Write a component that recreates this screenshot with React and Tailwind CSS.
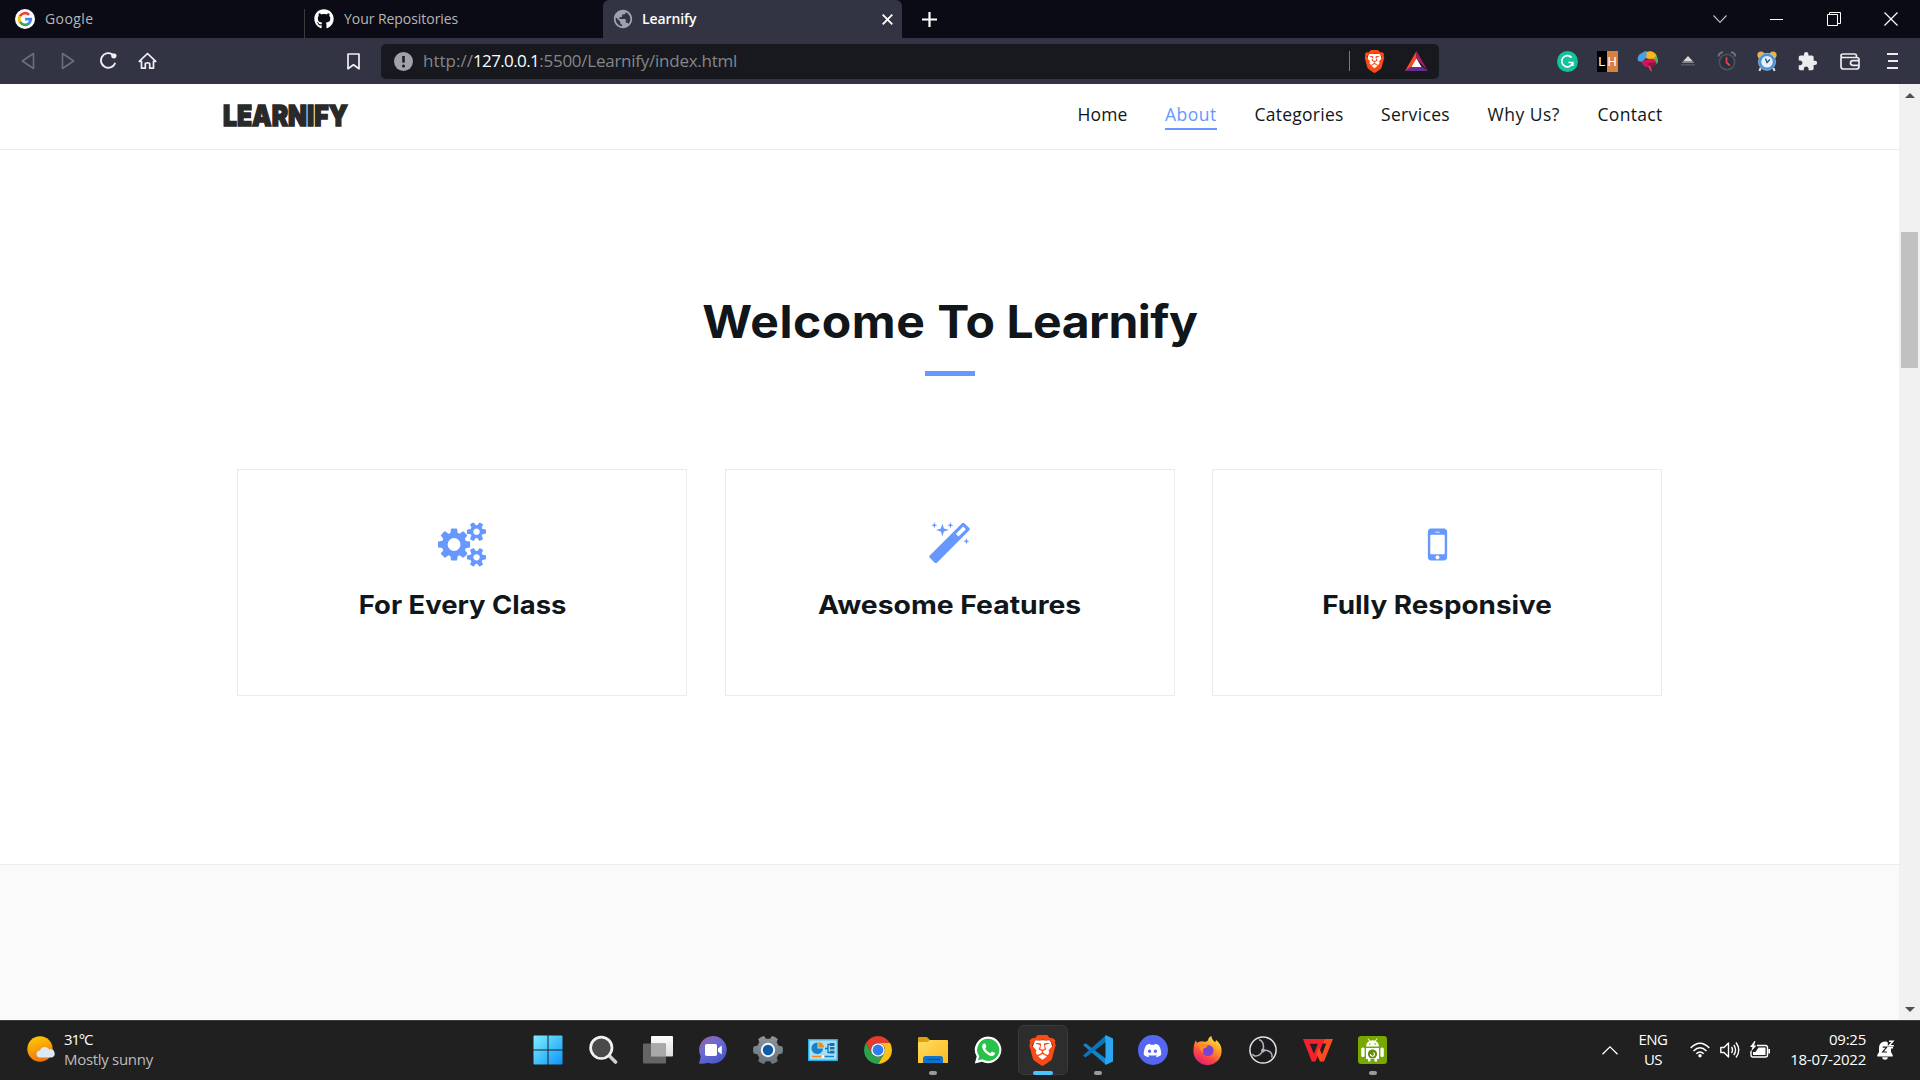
import React from "react";
import { FaGithub, FaDiscord } from "react-icons/fa";
import { SiBrave } from "react-icons/si";
import { MdExtension, MdPublic } from "react-icons/md";

/* ---------- shared drawings ---------- */

function GoogleIcon() {
  return (
    <svg className="size-5" viewBox="0 0 20 20">
      <circle cx="10" cy="10" r="10" fill="#fff" />
      <g fill="none" strokeWidth="2.7">
        <path d="M4.9 7.3A5.8 5.8 0 0 1 14.1 5.9" stroke="#ea4335" />
        <path d="M5.1 13.1A5.8 5.8 0 0 1 4.9 7.2" stroke="#fbbc05" />
        <path d="M14 14.2A5.8 5.8 0 0 1 5 12.9" stroke="#34a853" />
        <path d="M10.1 10.2H15.8A5.7 5.7 0 0 1 13.8 14.4" stroke="#4285f4" />
      </g>
    </svg>
  );
}

function BraveIcon({ className }) {
  return (
    <svg className={className} viewBox="0 0 24 24">
      <path d="M6 4H18L19.5 9L17 17L12 21L7 17L4.5 9Z" fill="#fff" />
      <SiBrave size={24} color="#fb4a14" />
    </svg>
  );
}

/* ---------- browser tab strip ---------- */

function TabStrip() {
  return (
    <div className="flex h-[38px] bg-[#0a0b14] text-sm">
      <div className="flex w-[304px] items-center pl-[15px]">
        <GoogleIcon />
        <span className="ml-2.5 tracking-[0.4px] text-[#b5b6ba]">Google</span>
      </div>
      <div className="mt-[9px] w-px bg-[#3b3b3d]" />
      <div className="flex w-[298px] items-center pl-[9px]">
        <FaGithub className="size-5 text-white" />
        <span className="ml-2.5 tracking-[-0.05px] text-[#b5b6ba]">Your Repositories</span>
      </div>
      <div className="flex w-[299px] items-center rounded-t-md bg-[#323443] pl-[9px]">
        <MdPublic className="size-[22px] text-[#9ea2ad]" />
        <span className="ml-2 font-semibold tracking-[-0.1px] text-white">Learnify</span>
        <svg className="mr-[9px] ml-auto size-[11px]" viewBox="0 0 11 11" stroke="#fff" strokeWidth="1.8">
          <path d="M.7.7L10.3 10.3M10.3.7L.7 10.3" />
        </svg>
      </div>
      <div className="flex w-[55px] items-center justify-center">
        <svg className="size-[15px]" viewBox="0 0 15 15" stroke="#fff" strokeWidth="2.2">
          <path d="M7.5 0V15M0 7.5H15" />
        </svg>
      </div>
      <div className="mr-px ml-auto flex items-center">
        <div className="flex w-[57px] justify-center">
          <svg className="h-2 w-[14px]" viewBox="0 0 14 8" fill="none" stroke="#c9cacd" strokeWidth="1.1">
            <path d="M.5.5L7 7.3L13.5.5" />
          </svg>
        </div>
        <div className="flex w-[57px] justify-center">
          <div className="h-px w-[13px] bg-white" />
        </div>
        <div className="flex w-[57px] justify-center">
          <svg className="size-[14px]" viewBox="0 0 14 14" fill="none" stroke="#fff">
            <path d="M.5 2.5H10.5V13.5H.5ZM2.5 2.5V.5H13.5V11.5H10.5" />
          </svg>
        </div>
        <div className="flex w-[57px] justify-center">
          <svg className="size-[14px]" viewBox="0 0 14 14" stroke="#fff" strokeWidth="1.2">
            <path d="M.5.5L13.5 13.5M13.5.5L.5 13.5" />
          </svg>
        </div>
      </div>
    </div>
  );
}

/* ---------- toolbar ---------- */

function Cell({ children, className = "w-10" }) {
  return <div className={"flex shrink-0 items-center justify-center " + className}>{children}</div>;
}

function BrainIcon() {
  return (
    <svg className="h-[21px] w-[22px]" viewBox="0 0 22 21">
      <path d="M1 10C0 6 2 3 5 2C7 0 10 0 11 1L10 6L8 8L5 11Z" fill="#4f9fe0" />
      <path d="M10 1C14-1 20 2 20 7L15 9L9 7Z" fill="#f7b81c" />
      <path d="M19 5C22 8 21 11 20 13L15 9Z" fill="#54b948" />
      <path d="M4 10C6 12 8 8 12 8C16 7 20 9 19 13C17 16 14 15 13 16C9 17 5 14 4 10Z" fill="#d3145a" />
      <path d="M10 12.500C13 12 16 11 19.500 12C18 16 15 16 13 16Z" fill="#8c1447" />
      <path d="M11 15L13.500 15.500L15 20.500L13.500 20Z" fill="#f2405c" />
    </svg>
  );
}

function Toolbar() {
  return (
    <div className="flex h-[46px] items-center bg-[#323443] pl-2">
      <Cell>
        <svg className="h-[18px] w-[14px]" viewBox="0 0 14 18" fill="none" stroke="#6c6e7b" strokeWidth="1.6" strokeLinejoin="round">
          <path d="M12.500 1.500V16.500L1.300 9Z" />
        </svg>
      </Cell>
      <Cell>
        <svg className="h-[18px] w-[14px]" viewBox="0 0 14 18" fill="none" stroke="#6c6e7b" strokeWidth="1.6" strokeLinejoin="round">
          <path d="M1.500 1.500V16.500L12.700 9Z" />
        </svg>
      </Cell>
      <Cell className="w-[39px]">
        <svg className="size-[18px]" viewBox="0 0 18 18" fill="none">
          <path d="M13 2.200A7.300 7.300 0 1 0 15.900 11.600" stroke="#f0f0f2" strokeWidth="1.900" strokeLinecap="round" />
          <path d="M12.200 1.500H15.500Q17.500 1.500 17.500 3.600Q17.500 6.400 15 6.400Q12.200 6.400 12.200 4Z" fill="#f0f0f2" />
        </svg>
      </Cell>
      <Cell>
        <svg className="h-[18px] w-[19px]" viewBox="0 0 19 18" fill="none" stroke="#f0f0f2" strokeWidth="1.700" strokeLinejoin="round" strokeLinecap="round">
          <path d="M1.300 9.300L9.500 1.500L17.700 9.300H15.500V16.200H11.700V11.800Q11.700 10.800 9.500 10.800Q7.300 10.800 7.300 11.800V16.200H3.500V9.300Z" />
        </svg>
      </Cell>
      <Cell className="ml-[166px] w-10">
        <svg className="h-[17px] w-[13px]" viewBox="0 0 13 17" fill="none" stroke="#f0f0f2" strokeWidth="1.700" strokeLinejoin="round">
          <path d="M1 1H12V15.800L6.500 11.800L1 15.800Z" />
        </svg>
      </Cell>
      <div className="ml-2 flex h-[35px] w-[1058px] items-center rounded-[5px] bg-[#17191f] pl-[13px] text-[17px]">
        <svg className="size-[19px]" viewBox="0 0 19 19">
          <circle cx="9.500" cy="9.500" r="9.500" fill="#9fa2aa" />
          <path d="M9.500 4V10.600" stroke="#17191f" strokeWidth="2.500" />
          <circle cx="9.500" cy="14" r="1.500" fill="#17191f" />
        </svg>
        <span className="ml-2.5 whitespace-nowrap text-[#84868a]">
          http://<span className="tracking-[-0.6px] text-white">127.0.0.1</span>
          <span className="tracking-[-0.25px]">:5500/Learnify/index.html</span>
        </span>
        <div className="ml-auto h-5 w-px bg-[#76787d]" />
        <BraveIcon className="ml-[13px] size-[23px]" />
        <svg className="mr-[11px] ml-[19px] h-5 w-[23px]" viewBox="0 0 23 20">
          <path d="M11.500 0L0 20L11.500 13Z" fill="#ff4724" />
          <path d="M11.500 0L23 20L11.500 8Z" fill="#9e1f63" />
          <path d="M0 20H23L16 15H7Z" fill="#662d91" />
          <path d="M11.500 7.500L16.500 16H6.500Z" fill="#fff" />
        </svg>
      </div>
      <Cell className="ml-[108px] w-10">
        <svg className="size-[21px]" viewBox="0 0 21 21">
          <circle cx="10.500" cy="10.500" r="10.500" fill="#15c39a" />
          <path d="M14.600 6.600A5.600 5.600 0 1 0 15.800 11.500H11.500M15.800 11.500V15" fill="none" stroke="#fff" strokeWidth="1.700" />
        </svg>
      </Cell>
      <Cell>
        <div className="flex h-[21px] w-[21px] font-['Roboto'] text-[13px] leading-[22px] text-white">
          <span className="w-1/2 bg-black text-center">L</span>
          <span className="w-1/2 bg-[#d9803f] text-center">H</span>
        </div>
      </Cell>
      <Cell className="w-[41px]">
        <BrainIcon />
      </Cell>
      <Cell className="w-[39px]">
        <svg className="h-[10px] w-[14px]" viewBox="0 0 14 10">
          <path d="M7 0L12 5.500H2Z" fill="#dcdcde" />
          <path d="M1 6.500H13" stroke="#85868c" />
          <path d="M0 8.800H14" stroke="#5f606b" strokeWidth="1.200" />
        </svg>
      </Cell>
      <Cell>
        <svg className="size-5" viewBox="0 0 20 20" fill="none">
          <circle cx="10" cy="11" r="7.700" stroke="#46525f" strokeWidth="1.700" fill="#2b2f3c" />
          <path d="M1.500 5.500Q2 1.500 6 1.200M18.500 5.500Q18 1.500 14 1.200" stroke="#68757f" strokeWidth="2" />
          <path d="M9.500 6V11.500L12.800 14.500" stroke="#e8424b" strokeWidth="1.700" />
        </svg>
      </Cell>
      <Cell>
        <svg className="h-[21px] w-5" viewBox="0 0 20 21">
          <path d="M3.500 17L2.500 20M16.500 17L17.500 20" stroke="#dfe7ef" strokeWidth="2" />
          <circle cx="4" cy="4" r="3.600" fill="#e8b448" />
          <circle cx="16" cy="4" r="3.600" fill="#e8b448" />
          <circle cx="10" cy="10.800" r="8.500" fill="#4c8fd6" stroke="#9cc3ea" strokeWidth=".8" />
          <circle cx="10" cy="10.800" r="5.800" fill="#e6f1fa" />
          <path d="M8.500 7.500L10 11.500L13 8.500" stroke="#31506e" strokeWidth="1.400" fill="none" />
        </svg>
      </Cell>
      <Cell>
        <MdExtension className="size-[21px] text-[#ececee]" />
      </Cell>
      <Cell className="w-[46px]">
        <svg className="h-[17px] w-5" viewBox="0 0 20 17" fill="none" stroke="#ececee" strokeWidth="1.700">
          <path d="M1 4.500V13.500Q1 16 3.500 16H16.500Q19 16 19 13.500V6.500Q19 4.500 16.500 4.500H3Q1 4.500 1 2.700Q1 1 3 1H14.500Q16.500 1 16.500 3V4.500M19 7.700H13Q10.500 7.700 10.500 10Q10.500 12.300 13 12.300H19" />
        </svg>
      </Cell>
      <Cell className="w-[38px]">
        <div className="flex w-[11px] flex-col gap-[5px]">
          <div className="h-0.5 bg-[#ececee]" />
          <div className="ml-px h-0.5 bg-[#ececee]" />
          <div className="h-0.5 bg-[#ececee]" />
        </div>
      </Cell>
    </div>
  );
}

/* ---------- page ---------- */

const NAV = [
  ["Home", "w-[50px] tracking-[0.15px] text-[#101619] border-transparent"],
  ["About", "w-[52px] tracking-[0.5px] text-[#6698ff] border-[#6698ff]"],
  ["Categories", "w-[89px] tracking-[0.25px] text-[#101619] border-transparent"],
  ["Services", "w-[69px] tracking-[0.34px] text-[#101619] border-transparent"],
  ["Why Us?", "w-[72.5px] tracking-[0.5px] text-[#101619] border-transparent"],
  ["Contact", "w-[65px] tracking-[0.3px] text-[#101619] border-transparent"],
];

function SiteHeader() {
  return (
    <header className="flex h-[66px] items-start justify-between border-b border-[#ebebeb] pr-[236.5px] pl-[223px]">
      <div className="mt-[17px] w-[124px] font-['Inter'] text-[29px] leading-[29px] font-black text-[#292929]">
        <span className="inline-block origin-left scale-x-[0.85] whitespace-nowrap [-webkit-text-stroke:1.5px_#292929]">LEARNIFY</span>
      </div>
      <nav className="mt-[18px] flex gap-[37.5px] text-[17.5px] leading-[25px]">
        {NAV.map(([label, cls]) => (
          <a key={label} className={"h-7 border-b-2 whitespace-nowrap " + cls}>
            {label}
          </a>
        ))}
      </nav>
    </header>
  );
}

function CogsIcon() {
  return (
    <svg className="h-[45px] w-[48.2px]" viewBox="0 0 1920 1792" fill="currentColor">
      <path d="M896 896q0-106-75-181t-181-75-181 75-75 181 75 181 181 75 181-75 75-181zM1664 1408q0-52-38-90t-90-38-90 38-38 90q0 53 37.500 90.500t90.500 37.500 90.500-37.500 37.500-90.500zM1664 384q0-52-38-90t-90-38-90 38-38 90q0 53 37.500 90.500t90.500 37.500 90.500-37.500 37.500-90.500zM1280 805v185q0 10-7 19.500t-16 10.500l-155 24q-11 35-32 76 34 48 90 115 7 11 7 20 0 12-7 19-23 30-82.500 89.500t-78.500 59.500q-11 0-21-7l-115-90q-37 19-77 31-11 108-23 155-7 24-30 24h-186q-11 0-20-7.500t-10-17.500l-23-153q-34-10-75-31l-118 89q-7 7-20 7-11 0-21-8-144-133-144-160 0-9 7-19 10-14 41-53t47-61q-23-44-35-82l-152-24q-10-1-17-9.500t-7-19.500v-185q0-10 7-19.500t16-10.500l155-24q11-35 32-76-34-48-90-115-7-11-7-20 0-12 7-20 22-30 82-89t79-59q11 0 21 7l115 90q34-18 77-32 11-108 23-154 7-24 30-24h186q11 0 20 7.500t10 17.500l23 153q34 10 75 31l118-89q8-7 20-7 11 0 21 8 144 133 144 160 0 8-7 19-12 16-42 54t-45 60q23 48 34 82l152 23q10 2 17 10.500t7 19.500zM1920 1338v140q0 16-149 31-12 27-30 52 51 113 51 138 0 4-4 7-122 71-124 71-8 0-46-47t-52-68q-20 2-30 2t-30-2q-14 21-52 68t-46 47q-2 0-124-71-4-3-4-7 0-25 51-138-18-25-30-52-149-15-149-31v-140q0-16 149-31 13-29 30-52-51-113-51-138 0-4 4-7 4-2 35-20t59-34 30-16q8 0 46 46.500t52 67.500q20-2 30-2t30 2q51-71 92-112l6-2q4 0 124 70 4 3 4 7 0 25-51 138 17 23 30 52 149 15 149 31zM1920 314v140q0 16-149 31-12 27-30 52 51 113 51 138 0 4-4 7-122 71-124 71-8 0-46-47t-52-68q-20 2-30 2t-30-2q-14 21-52 68t-46 47q-2 0-124-71-4-3-4-7 0-25 51-138-18-25-30-52-149-15-149-31v-140q0-16 149-31 13-29 30-52-51-113-51-138 0-4 4-7 4-2 35-20t59-34 30-16q8 0 46 46.500t52 67.500q20-2 30-2t30 2q51-71 92-112l6-2q4 0 124 70 4 3 4 7 0 25-51 138 17 23 30 52 149 15 149 31z" />
    </svg>
  );
}

function WandIcon() {
  return (
    <svg className="size-[45px]" viewBox="0 0 1792 1792" fill="currentColor">
      <path d="M1254 581l293-293-107-107-293 293zM1702 288q0 27-18 45l-1286 1286q-18 18-45 18t-45-18l-198-198q-18-18-18-45t18-45l1286-1286q18-18 45-18t45 18l198 198q18 18 18 45z" />
      <path d="M323 98l98 30-98 30-30 98-30-98-98-30 98-30 30-98zM673 260l196 60-196 60-60 196-60-196-196-60 196-60 60-196zM1599 738l98 30-98 30-30 98-30-98-98-30 98-30 30-98zM963 98l98 30-98 30-30 98-30-98-98-30 98-30 30-98z" />
    </svg>
  );
}

function PhoneIcon() {
  return (
    <svg className="size-[45px]" viewBox="0 0 1792 1792" fill="currentColor">
      <path d="M976 1408q0-33-23.500-56.500t-56.500-23.500-56.500 23.500-23.500 56.500 23.500 56.500 56.500 23.500 56.500-23.500 23.500-56.500zM1184 1248v-704q0-13-9.500-22.500t-22.500-9.500h-512q-13 0-22.500 9.500t-9.500 22.500v704q0 13 9.500 22.500t22.500 9.500h512q13 0 22.500-9.500t9.500-22.500zM992 400q0-16-16-16h-160q-16 0-16 16t16 16h160q16 0 16-16zM1280 384v1024q0 52-38 90t-90 38h-512q-52 0-90-38t-38-90v-1024q0-52 38-90t90-38h512q52 0 90 38t38 90z" />
    </svg>
  );
}

const CARDS = [
  ["For Every Class", CogsIcon, "scale-x-[1.075] pl-px"],
  ["Awesome Features", WandIcon, "scale-x-[1.11]"],
  ["Fully Responsive", PhoneIcon, "scale-x-[1.092]"],
];

function Page() {
  return (
    <div className="flex h-[936px] bg-white">
      <main className="flex w-[1899px] flex-col">
        <SiteHeader />
        <section className="flex h-[714px] flex-col items-center pt-[138px]">
          <h1 className="h-[68px] scale-x-[1.068] font-['Inter'] text-[45px] leading-[68px] font-bold whitespace-nowrap text-[#101619]">
            <span className="tracking-[0.5px]">Welcome </span>
            <span>To </span>
            <span className="tracking-[-0.5px]">Learnify</span>
          </h1>
          <div className="mt-[15px] h-[5px] w-[50px] bg-[#6698ff]" />
          <div className="mt-[93px] flex w-[1425px] justify-between">
            {CARDS.map(([title, Icon, stretch]) => (
              <div key={title} className="flex h-[227px] w-[450px] flex-col items-center border border-[#ebebeb] pt-[51.5px] text-[#6698ff]">
                <Icon />
                <h2 className={"mt-[19.5px] font-['Inter'] text-[25.5px] leading-[38px] font-bold whitespace-nowrap text-[#101619] " + stretch}>
                  {title}
                </h2>
              </div>
            ))}
          </div>
        </section>
        <div className="flex-1 border-t border-[#ebebeb] bg-[#fafafa]" />
      </main>
      <div className="flex w-[21px] flex-col items-center bg-[#f1f1f1]">
        <svg className="mt-[9px] h-[5px] w-[10px]" viewBox="0 0 10 5" fill="#505050">
          <path d="M5 0L10 5H0Z" />
        </svg>
        <div className="mt-[134px] h-[136px] w-[17px] bg-[#c1c1c1]" />
        <svg className="mt-auto mb-2 h-[5px] w-[10px]" viewBox="0 0 10 5" fill="#505050">
          <path d="M0 0H10L5 5Z" />
        </svg>
      </div>
    </div>
  );
}

/* ---------- taskbar icons ---------- */

const WindowsIcon = () => (
  <svg className="size-[30px]" viewBox="0 0 30 30">
    <defs>
      <linearGradient id="win" x1="0" y1="0" x2="1" y2="1">
        <stop offset="0" stopColor="#80f0ff" />
        <stop offset="1" stopColor="#0a94f8" />
      </linearGradient>
    </defs>
    <path d="M.5 1.500Q.5.5 1.500.5H14.500V14.500H.5ZM15.500.5H28.500Q29.500.5 29.500 1.500V14.500H15.500ZM.5 15.500H14.500V29.500H1.500Q.5 29.500.5 28.500ZM15.500 15.500H29.500V28.500Q29.500 29.500 28.500 29.500H15.500Z" fill="url(#win)" />
  </svg>
);

const SearchIcon = () => (
  <svg className="size-[30px]" viewBox="0 0 30 30">
    <path d="M20.500 20L27.500 27" stroke="#cfd0d4" strokeWidth="3.600" strokeLinecap="round" />
    <circle cx="13.300" cy="12.800" r="10.700" fill="#4a4a4a" stroke="#f2f2f4" strokeWidth="2.700" />
  </svg>
);

const TaskViewIcon = () => (
  <svg className="size-[30px]" viewBox="0 0 30 30">
    <defs>
      <linearGradient id="tv" x1="0" y1="0" x2="0" y2="1">
        <stop offset="0" stopColor="#fff" />
        <stop offset="1" stopColor="#dcdcdc" />
      </linearGradient>
    </defs>
    <rect x="8" y="1" width="22" height="20.500" rx="1" fill="url(#tv)" />
    <rect x="0" y="8.500" width="23" height="20" rx="1" fill="#6e6e6e" fillOpacity="0.88" />
    <path d="M8 8.500H23V21.500H8Z" fill="#a9a9a9" />
  </svg>
);

const ChatIcon = () => (
  <svg className="size-[30px]" viewBox="0 0 30 30">
    <defs>
      <linearGradient id="chat" x1="0" y1="0" x2="0.700" y2="1">
        <stop offset="0" stopColor="#a05f9c" />
        <stop offset="0.450" stopColor="#6e6bd2" />
        <stop offset="1" stopColor="#4b57c8" />
      </linearGradient>
    </defs>
    <path d="M15 1A13.800 13.800 0 1 1 10 27.700Q6 29 .8 28.500Q2.500 25 2.600 21A13.800 13.800 0 0 1 15 1Z" fill="url(#chat)" />
    <rect x="7" y="9" width="12" height="12" rx="1.800" fill="#fff" />
    <path d="M20 13.500L23.800 10.500V19.500L20 16.500Z" fill="#fff" />
  </svg>
);

const SettingsIcon = () => (
  <svg className="size-[30px]" viewBox="0 0 30 30">
    <defs>
      <linearGradient id="gear" x1="0" y1="0" x2="0" y2="1">
        <stop offset="0" stopColor="#8d949b" />
        <stop offset="1" stopColor="#68727b" />
      </linearGradient>
    </defs>
    <path d="M11 1L13 3.800H17L19 1Q22 1.500 24.800 4L23.700 7.300L25.700 10.800L29.300 11.500Q30.500 15 29.300 18.500L25.700 19.200L23.700 22.700L24.800 26Q22 28.500 19 29L17 26.200H13L11 29Q8 28.500 5.200 26L6.300 22.700L4.300 19.200L.7 18.500Q-.5 15 .7 11.500L4.300 10.800L6.300 7.300L5.200 4Q8 1.500 11 1Z" fill="url(#gear)" />
    <circle cx="15" cy="15" r="6.200" fill="#0f5aa8" stroke="#f4f6f8" strokeWidth="2" />
  </svg>
);

const PanelIcon = () => (
  <svg className="h-[22px] w-[30px]" viewBox="0 0 30 22">
    <rect x=".7" y=".7" width="28.600" height="20.600" fill="#a9def5" stroke="#27b0e8" strokeWidth="1.400" />
    <path d="M9.500 3.500A5.800 5.800 0 1 0 15 9.500H9.500Z" fill="#1583c7" />
    <path d="M10.500 3V8.500H16A5.600 5.600 0 0 0 10.500 3Z" fill="#f08a1c" />
    <path d="M17 9.500H20V5.500H22M20 9.500V13.500H22" stroke="#1572b0" fill="none" strokeWidth="1.300" />
    <path d="M22 4H26.500V7H22ZM22 8H26.500V10.500H22ZM22 11.800H26.500V14.500H22Z" fill="#1572b0" />
    <path d="M4 17.500H15" stroke="#f08a1c" strokeWidth="1.500" />
    <path d="M15 17.500H26" stroke="#1583c7" strokeWidth="1.500" />
    <circle cx="15" cy="17.500" r="1.500" fill="#fff" />
  </svg>
);

const ChromeIcon = () => (
  <svg className="size-[28px]" viewBox="0 0 28 28">
    <path d="M1.880 7A14 14 0 0 1 26.120 7H14A7 7 0 0 0 7.940 10.500L7.940 17.500Z" fill="#e33b2e" />
    <path d="M26.120 7A14 14 0 0 1 14 28L20.060 17.500A7 7 0 0 0 14 7Z" fill="#fbc116" />
    <path d="M14 28A14 14 0 0 1 1.880 7L7.940 17.500A7 7 0 0 0 20.060 17.500Z" fill="#2ba24c" />
    <circle cx="14" cy="14" r="6.800" fill="#fff" />
    <circle cx="14" cy="14" r="5.400" fill="#2f7df0" />
  </svg>
);

const FolderIcon = () => (
  <svg className="size-[30px]" viewBox="0 0 30 30">
    <defs>
      <linearGradient id="fold" x1="0" y1="0" x2="1" y2="1">
        <stop offset="0" stopColor="#ffdc65" />
        <stop offset="1" stopColor="#fbb91e" />
      </linearGradient>
    </defs>
    <path d="M0 3Q0 2 1 2H9L12 5H29V12H0Z" fill="#dfa00a" />
    <path d="M0 7H9L12 5H29Q30 5 30 6V28H0Z" fill="url(#fold)" />
    <path d="M5 28V23.500Q5 21 7.500 21H22.500Q25 21 25 23.500V28Z" fill="#0f74cf" />
    <path d="M8 24.500H22" stroke="#0a4f98" strokeWidth="1.200" />
  </svg>
);

const WhatsappIcon = () => (
  <svg className="size-[28px]" viewBox="0 0 28 28">
    <path d="M14.300.4A13.400 13.400 0 1 1 8 25.800L.8 27.600L2.700 20.600A13.400 13.400 0 0 1 14.300.4Z" fill="#fff" />
    <path d="M14.300 2.700A11.100 11.100 0 1 1 8.300 23.200L4 24.300L5.200 20.200A11.100 11.100 0 0 1 14.300 2.700Z" fill="#26c24a" />
    <path d="M9.800 7.400C8.600 8 7.800 9.600 8.300 11.600C9.500 15.700 13 18.900 17 20C19.200 20.400 20.900 19 21.100 17.100L17.900 15.400L16.300 17.200C13.900 16.200 12.200 14.500 11.200 12.300L12.500 10.700L11.200 7.600Z" fill="#fff" />
  </svg>
);

const VscodeIcon = () => (
  <svg className="size-[30px]" viewBox="0 0 30 30">
    <path d="M0 10L2.500 8.200L24 24.500V29.500L22 29Z" fill="#0f86cf" />
    <path d="M0 20.500L2.500 22.500L24 6V.5L21.500 1.500Z" fill="#0b74ba" />
    <path d="M22 .7L23 .3L30 3.500V26.500L23 29.700L22 29.300V24L22.500 23V7Z" fill="#2aa7f0" />
  </svg>
);

const DiscordIcon = () => (
  <div className="flex size-[30px] items-center justify-center rounded-full bg-[#5566f2]">
    <FaDiscord className="size-[19px] text-white" />
  </div>
);

const FirefoxIcon = () => (
  <svg className="size-[29px]" viewBox="0 0 29 29">
    <defs>
      <linearGradient id="ff" x1="0.850" y1="0" x2="0.300" y2="1">
        <stop offset="0" stopColor="#fff04a" />
        <stop offset="0.350" stopColor="#ffa52a" />
        <stop offset="0.700" stopColor="#fb4a42" />
        <stop offset="1" stopColor="#e01a78" />
      </linearGradient>
    </defs>
    <path d="M2.500 4.500Q3.300 5.300 4 6.800Q7.500 4.300 11.500 5.800Q15 6 15.500 2.500Q16.500.8 18.500 0Q18.500 3.500 22 6Q23.300 5.500 22.800 3.800Q28.600 8 28.600 15A14.100 14.100 0 1 1 .4 15Q.3 9 2.500 4.500Z" fill="url(#ff)" />
    <circle cx="15" cy="14.500" r="5.600" fill="#7a43d6" />
    <path d="M5 9Q10 6.500 15 10Q13 12.200 10.500 12.500Q9.500 14 10.500 17Q7.500 15 5 9Z" fill="#fb8a2b" />
  </svg>
);

const ObsIcon = () => (
  <svg className="size-[28px]" viewBox="0 0 28 28" fill="none">
    <circle cx="14" cy="14" r="13.100" fill="#1d1b1f" stroke="#e4e4e4" strokeWidth="1.500" />
    <g stroke="#b4b4b8" strokeWidth="1.500">
      <path d="M14 14.500Q15.500 8.500 12.500 5Q11.500 3.800 10 4" />
      <path d="M14 14.500Q20.500 13.500 22.800 18.500Q23.500 20.500 22.500 21.500" />
      <path d="M14 14.500Q11 20.500 6 20Q4 19.700 3.500 18" />
    </g>
    <circle cx="14" cy="14.500" r="1.900" fill="#b4b4b8" />
  </svg>
);

const WpsIcon = () => (
  <svg className="h-[23px] w-[30px]" viewBox="0 0 30 23">
    <path d="M0 0H16.500L14.800 4.800H6.700L11 14.800L16.500 0H21.500L12.500 22.500H8.800Z" fill="#f5222d" />
    <path d="M21.500 0H30L21 22.500H17L13.500 14.500L16 8.500L19 15.500L23.300 4.600H19.700Z" fill="#fb4b1f" />
  </svg>
);

const AndroidIcon = () => (
  <svg className="h-[28px] w-[29px]" viewBox="0 0 29 28">
    <rect width="29" height="28" rx="3" fill="#76a800" />
    <path d="M10 2.500L12 5.500M19 2.500L17 5.500" stroke="#fff" />
    <path d="M8 10.500A6.500 6.200 0 0 1 21 10.500Z" fill="#fff" />
    <circle cx="11.800" cy="8" r=".8" fill="#76a800" />
    <circle cx="17.200" cy="8" r=".8" fill="#76a800" />
    <path d="M8 12H21V23H19V25.500H16.500V23H12.500V25.500H10V23H8Z" fill="#fff" />
    <rect x="3.200" y="11.500" width="3.400" height="9.500" rx="1.500" fill="#fff" />
    <rect x="22.400" y="11.500" width="3.400" height="9.500" rx="1.500" fill="#fff" />
    <circle cx="14.500" cy="18" r="4.600" fill="#5f8d00" />
    <path d="M12.500 18A2 2 0 1 0 15.500 16.500" stroke="#fff" strokeWidth="1.200" fill="none" />
  </svg>
);

const BraveTask = () => <BraveIcon className="size-[31px]" />;

const APPS = [
  [WindowsIcon], [SearchIcon], [TaskViewIcon], [ChatIcon], [SettingsIcon], [PanelIcon], [ChromeIcon],
  [FolderIcon, "dot"], [WhatsappIcon], [BraveTask, "active"], [VscodeIcon, "dot"], [DiscordIcon],
  [FirefoxIcon], [ObsIcon], [WpsIcon], [AndroidIcon, "dot"],
];

function Taskbar() {
  return (
    <footer className="flex h-[60px] items-center border-t border-[#3a3c3e] bg-[#202020] pb-px text-[15px] leading-5">
      <div className="flex w-[520px] items-center pl-[27px]">
        <svg className="-mt-px h-[27px] w-7" viewBox="0 0 28 27">
          <defs>
            <linearGradient id="sun" x1="0.300" y1="0" x2="0.600" y2="1">
              <stop offset="0" stopColor="#fdc905" />
              <stop offset="1" stopColor="#f0700c" />
            </linearGradient>
          </defs>
          <circle cx="13" cy="13" r="12.700" fill="url(#sun)" />
          <path d="M13 21.500A3 3 0 0 1 13 14.500A5.300 5.300 0 0 1 22.500 13.500A4 4 0 0 1 24.500 21.500Z" fill="#dbe8f8" />
        </svg>
        <div className="ml-[9px] flex flex-col pb-[3px]">
          <span className="tracking-[-1.2px] text-white">31°C</span>
          <span className="tracking-[-0.3px] text-[#bdbdbd]">Mostly sunny</span>
        </div>
      </div>
      <div className="flex w-[880px]">
        {APPS.map(([Icon, state], i) => (
          <div key={i} className="flex w-[55px] justify-center">
            <div
              className={
                state === "active"
                  ? "relative flex size-[50px] items-center justify-center rounded-md border border-[#3a3a3a] bg-[#2d2d2d]"
                  : "relative flex size-[50px] items-center justify-center"
              }
            >
              <Icon />
              {state === "dot" && <div className="absolute bottom-0 h-1 w-2 rounded-full bg-[#9a9a9a]" />}
              {state === "active" && <div className="absolute -bottom-px h-1 w-5 rounded-full bg-[#4cc2ff]" />}
            </div>
          </div>
        ))}
      </div>
      <div className="flex flex-1 items-center text-white">
        <svg className="ml-[202px] h-[9px] w-4" viewBox="0 0 16 9" fill="none" stroke="#fff" strokeWidth="1.300">
          <path d="M.5 8.300L8 .9L15.500 8.300" />
        </svg>
        <div className="ml-5 flex w-[30px] flex-col items-center pb-[3px] tracking-[-0.5px]">
          <span>ENG</span>
          <span>US</span>
        </div>
        <svg className="ml-[22px] h-4 w-5" viewBox="0 0 20 16" fill="none" stroke="#fff" strokeWidth="1.500">
          <path d="M.7 6Q10-3.500 19.300 6" />
          <path d="M3.500 9Q10 2.500 16.500 9" />
          <path d="M6.300 11.800Q10 8.200 13.700 11.800" />
          <circle cx="10" cy="13.800" r="1.700" fill="#fff" stroke="none" />
        </svg>
        <svg className="ml-[10px] h-[18px] w-5" viewBox="0 0 20 18" fill="none" stroke="#fff" strokeWidth="1.400">
          <path d="M.8 6.500H4L8.500 2V16L4 11.500H.8Z" strokeLinejoin="round" />
          <path d="M11.500 6Q13.500 9 11.500 12M13.800 3.800Q17.300 9 13.800 14.200M16 1.500Q21.500 9 16 16.500" />
        </svg>
        <svg className="-mt-0.5 ml-[10px] h-[17px] w-5" viewBox="0 0 20 17">
          <path d="M7 4.500H15.500Q17.500 4.500 17.500 6.500V14Q17.500 16 15.500 16H3Q1 16 1 14V10" fill="none" stroke="#fff" strokeWidth="1.400" />
          <path d="M8.500 6.500H15.500V14H3V11H5.500Z" fill="#fff" />
          <path d="M4.500 0L0 6H2.500L1 10.500L6.500 4.500H4L5.500 0Z" fill="#fff" />
          <path d="M18.300 8H20V12.500H18.300Z" fill="#fff" />
        </svg>
        <div className="ml-4 flex w-[80px] flex-col items-end pb-[3px] tracking-[-0.25px]">
          <span>09:25</span>
          <span>18-07-2022</span>
        </div>
        <svg className="ml-[11px] h-5 w-[18px]" viewBox="0 0 18 20">
          <path d="M8 1.500Q2 2 2 8V12L.3 15V16.500H15.700V15L14 12V8.500H16V6H13Q12 1.500 8 1.500Z" fill="#fff" />
          <path d="M5 17.300H11Q10.500 19.800 8 19.800Q5.500 19.800 5 17.300Z" fill="#fff" />
          <path d="M5.700 7.200H9.700L5.700 12H10" fill="none" stroke="#202020" strokeWidth="1.200" />
          <path d="M10.800 0H18V6.800H10.800Z" fill="#202020" />
          <path d="M12 1.300H16L12 5.800H16.800" fill="none" stroke="#fff" strokeWidth="1.400" />
        </svg>
      </div>
    </footer>
  );
}

export default function App() {
  return (
    <div className="flex h-[1080px] w-[1920px] flex-col overflow-hidden bg-white font-['Open_Sans',sans-serif]">
      <TabStrip />
      <Toolbar />
      <Page />
      <Taskbar />
    </div>
  );
}
